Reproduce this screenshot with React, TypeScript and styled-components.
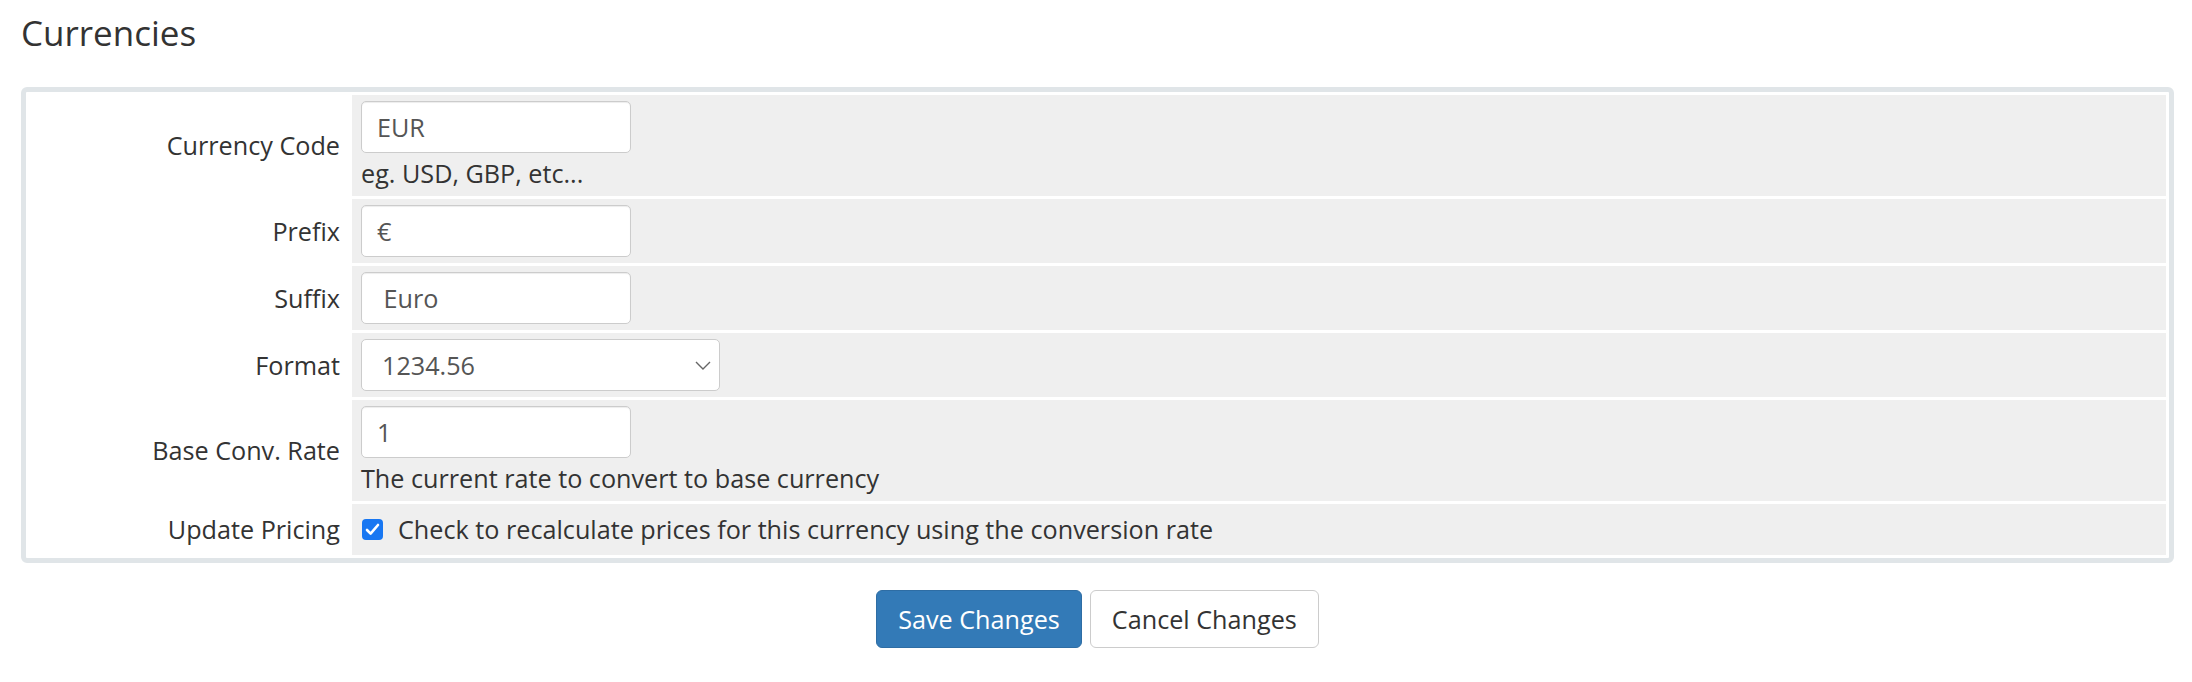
import styled, { createGlobalStyle } from 'styled-components'

const GlobalStyle = createGlobalStyle`
  html, body {
    margin: 0;
    padding: 0;
    background: #ffffff;
  }
  body {
    font-family: 'Open Sans', 'Liberation Sans', sans-serif;
    font-size: 25.2px;
    color: #333333;
  }
`

const fields = [
  { label: 'Currency Code', value: 'EUR', help: 'eg. USD, GBP, etc...' },
  { label: 'Prefix', value: '€' },
  { label: 'Suffix', value: ' Euro' },
]

export default function App() {
  return (
    <Page>
      <GlobalStyle />
      <Title>Currencies</Title>
      <FormTable>
        {fields.map((f) => (
          <Row key={f.label}>
            <Label>{f.label}</Label>
            <Field>
              <TextInput defaultValue={f.value} />
              {f.help && <Help>{f.help}</Help>}
            </Field>
          </Row>
        ))}
        <Row>
          <Label>Format</Label>
          <Field>
            <SelectWrap>
              <Select defaultValue="1">
                <option value="1">1234.56</option>
                <option value="2">1,234.56</option>
                <option value="3">1.234,56</option>
                <option value="4">1,234</option>
              </Select>
              <Chevron width="16" height="9" viewBox="0 0 16 9">
                <path d="M1 1l7 7 7-7" fill="none" stroke="#666" strokeWidth="1.4" />
              </Chevron>
            </SelectWrap>
          </Field>
        </Row>
        <Row>
          <Label>Base Conv. Rate</Label>
          <Field>
            <TextInput defaultValue="1" />
            <Help>The current rate to convert to base currency</Help>
          </Field>
        </Row>
        <Row>
          <Label>Update Pricing</Label>
          <Field $compact>
            <CheckLabel>
              <CheckBox>
                <svg width="15" height="13" viewBox="0 0 15 13">
                  <path d="M2 7l3.6 3.6L13 2" fill="none" stroke="#fff" strokeWidth="2.6" strokeLinecap="round" strokeLinejoin="round" />
                </svg>
              </CheckBox>
              Check to recalculate prices for this currency using the conversion rate
            </CheckLabel>
          </Field>
        </Row>
      </FormTable>
      <Buttons>
        <Button $primary>Save Changes</Button>
        <Button>Cancel Changes</Button>
      </Buttons>
    </Page>
  )
}

const Page = styled.div`
  padding: 14px 18px 30px 21px;
`

const Title = styled.h1`
  margin: 0 0 35px 0;
  font-size: 35px;
  font-weight: 400;
  line-height: 38px;
  color: #333333;
`

const FormTable = styled.div`
  display: grid;
  grid-template-columns: 320px 1fr;
  gap: 3px;
  padding: 3px;
  border: 5px solid #e0e5e8;
  border-radius: 6px;
  background: #ffffff;
`

const Row = styled.div`
  display: contents;
`

const Label = styled.div`
  display: flex;
  align-items: center;
  justify-content: flex-end;
  padding: 0 9px;
  background: #ffffff;
  text-align: right;
  line-height: 35px;
`

const Field = styled.div<{ $compact?: boolean }>`
  display: flex;
  flex-direction: column;
  align-items: flex-start;
  padding: ${(p) => (p.$compact ? '8px 9px' : '6px 9px')};
  background: #efefef;
`

const TextInput = styled.input`
  box-sizing: border-box;
  width: 270px;
  height: 52px;
  padding: 0 15px;
  border: 1px solid #cccccc;
  border-radius: 5px;
  background: #ffffff;
  box-shadow: inset 0 1px 1px rgba(0, 0, 0, 0.075);
  font-family: inherit;
  font-size: 25.2px;
  color: #555555;
  outline: none;
`

const Help = styled.div`
  margin-top: 4px;
  line-height: 33px;
  color: #333333;
`

const SelectWrap = styled.div`
  position: relative;
  width: 359px;
`

const Select = styled.select`
  box-sizing: border-box;
  width: 100%;
  height: 52px;
  padding: 0 20px;
  border: 1px solid #cccccc;
  border-radius: 5px;
  background: #ffffff;
  appearance: none;
  font-family: inherit;
  font-size: 25.2px;
  color: #555555;
  outline: none;
`

const Chevron = styled.svg`
  position: absolute;
  right: 9px;
  top: 22px;
  pointer-events: none;
`

const CheckLabel = styled.label`
  display: flex;
  align-items: center;
  gap: 15px;
  line-height: 35px;
  padding-left: 1px;
`

const CheckBox = styled.span`
  display: inline-flex;
  align-items: center;
  justify-content: center;
  width: 21px;
  height: 21px;
  border-radius: 4px;
  background: #1877f2;
`

const Buttons = styled.div`
  display: flex;
  justify-content: center;
  gap: 8px;
  margin-top: 27px;
`

const Button = styled.button<{ $primary?: boolean }>`
  box-sizing: border-box;
  height: 58px;
  padding: 0 21px;
  border: 1px solid ${(p) => (p.$primary ? '#2e6da4' : '#cccccc')};
  border-radius: 6px;
  background: ${(p) => (p.$primary ? '#337ab7' : '#ffffff')};
  color: ${(p) => (p.$primary ? '#ffffff' : '#333333')};
  font-family: inherit;
  font-size: 25.2px;
  line-height: 35px;
  cursor: pointer;
`
